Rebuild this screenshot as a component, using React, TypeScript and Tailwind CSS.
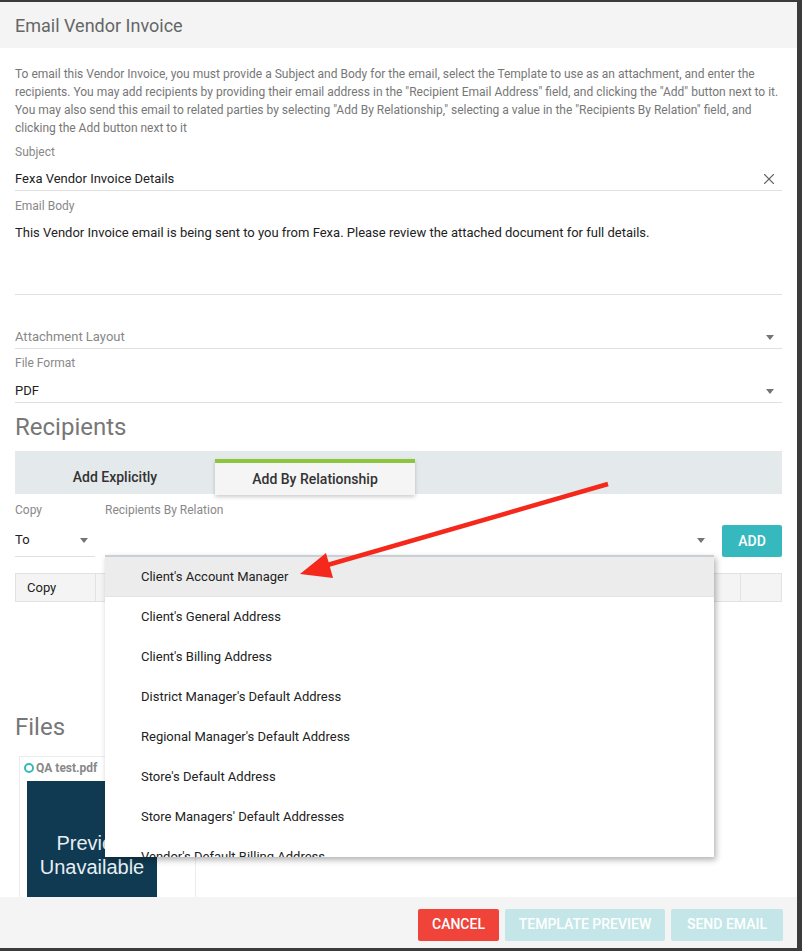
import { X } from "lucide-react";

const relations = [
  "Client's Account Manager",
  "Client's General Address",
  "Client's Billing Address",
  "District Manager's Default Address",
  "Regional Manager's Default Address",
  "Store's Default Address",
  "Store Managers' Default Addresses",
  "Vendor's Default Billing Address",
];

function Caret() {
  return (
    <span className="h-0 w-0 border-x-[4px] border-t-[5px] border-x-transparent border-t-[#757575]" />
  );
}

export default function App() {
  return (
    <div className="relative h-[951px] w-[802px] overflow-hidden bg-[#3b3b3b] font-['Roboto',sans-serif]">
      <div className="mt-[2px] flex h-[946px] w-[797px] flex-col bg-white">
        {/* Header */}
        <div className="flex h-[46px] shrink-0 items-center bg-[#f4f4f4] px-[15px]">
          <h1 className="text-[18px] text-[#666]">Email Vendor Invoice</h1>
        </div>

        {/* Body */}
        <div className="relative flex-1 overflow-hidden px-[15px]">
          <p className="mt-[17px] text-[12px] leading-[18px] text-[#777]">
            To email this Vendor Invoice, you must provide a Subject and Body for the email, select the Template to use as
            an attachment, and enter the recipients. You may add recipients by providing their email address in the
            "Recipient Email Address" field, and clicking the "Add" button next to it. You may also send this email to
            related parties by selecting "Add By Relationship," selecting a value in the "Recipients By Relation" field, and
            clicking the Add button next to it
          </p>

          {/* Subject */}
          <div className="mt-[7px] text-[12px] leading-4 text-[#888]">Subject</div>
          <div className="flex h-[31px] items-center justify-between border-b border-[#e0e0e0] pt-[8px] text-[13px] text-[#222]">
            <span className="leading-[22px]">Fexa Vendor Invoice Details</span>
            <X className="mr-[4px] h-[18px] w-[18px] text-[#666]" strokeWidth={1.5} />
          </div>

          {/* Email body */}
          <div className="mt-[7px] text-[12px] leading-4 text-[#888]">Email Body</div>
          <div className="h-[81px] border-b border-[#e0e0e0] pt-[7px] text-[13px] leading-[24px] text-[#222]">
            This Vendor Invoice email is being sent to you from Fexa. Please review the attached document for full details.
          </div>

          {/* Attachment layout */}
          <div className="flex h-[54px] items-start justify-between border-b border-[#e0e0e0] pt-[30px] text-[13px] leading-[24px] text-[#888]">
            <span>Attachment Layout</span>
            <span className="mr-[8px] mt-[10px] flex">
              <Caret />
            </span>
          </div>

          {/* File format */}
          <div className="mt-[6px] text-[12px] leading-4 text-[#888]">File Format</div>
          <div className="flex h-[32px] items-start justify-between border-b border-[#e0e0e0] pt-[8px] text-[13px] leading-[24px] text-[#222]">
            <span>PDF</span>
            <span className="mr-[8px] mt-[10px] flex">
              <Caret />
            </span>
          </div>

          {/* Recipients */}
          <h2 className="mt-[8px] text-[24px] leading-[32px] text-[#777]">Recipients</h2>
          <div className="mt-[8px] flex h-[43px] bg-[#e4e9ec]">
            <div className="flex w-[200px] items-center justify-center pt-[9px] text-[14px] font-medium text-[#333]">
              Add Explicitly
            </div>
            <div className="mt-[8px] flex h-[36px] w-[200px] items-center justify-center border-t-[4px] border-[#8cc63f] bg-[#f5f5f5] text-[14px] font-medium text-[#333] shadow-[0_2px_4px_rgba(0,0,0,0.2)]">
              Add By Relationship
            </div>
          </div>

          <div className="mt-[8px] flex text-[12px] leading-4 text-[#888]">
            <span className="w-[90px]">Copy</span>
            <span>Recipients By Relation</span>
          </div>
          <div className="flex h-[39px] items-end">
            <div className="flex h-[39px] w-[80px] items-center justify-between border-b border-[#e0e0e0] pt-[6px] text-[13px] text-[#222]">
              <span>To</span>
              <span className="mr-[7px] flex">
                <Caret />
              </span>
            </div>
            <div className="ml-[10px] flex h-[39px] w-[605px] items-center justify-end pt-[6px]">
              <span className="mr-[3px] flex">
                <Caret />
              </span>
            </div>
            <button className="ml-[14px] h-[32px] w-[60px] rounded-[2px] bg-[#35b9be] text-[14px] font-medium uppercase text-white">
              Add
            </button>
          </div>

          {/* Table header */}
          <div className="mt-[16px] flex h-[29px] border border-[#e2e2e2] bg-[#f4f4f4] text-[13px] text-[#222]">
            <div className="flex w-[80px] items-center border-r border-[#e2e2e2] pl-[11px]">Copy</div>
            <div className="flex-1 border-r border-[#e2e2e2]" />
            <div className="w-[40px]" />
          </div>

          {/* Files */}
          <h2 className="mt-[109px] text-[24px] leading-[32px] text-[#777]">Files</h2>
          <div className="ml-[4px] mt-[13px] h-[160px] w-[177px] border border-[#ececec] px-[7px] pt-[4px]">
            <div className="-ml-[3px] flex items-center gap-[2px] text-[12px] font-bold leading-[14px] text-[#888]">
              <span className="h-[10px] w-[10px] rounded-full border-[2px] border-[#35b9be]" />
              QA test.pdf
            </div>
            <div className="mt-[6px] flex h-[130px] w-[130px] items-center justify-center bg-[#0f3a52] pt-[18px] text-center font-['Liberation_Sans',Arial,sans-serif] text-[20px] leading-[24px] text-[#e8eef2]">
              Preview
              <br />
              Unavailable
            </div>
          </div>

          {/* Dropdown menu */}
          <div className="absolute left-[105px] top-[507px] h-[302px] w-[609px] overflow-hidden border-t-[2px] border-[#c9cfd2] bg-white shadow-[2px_3px_6px_rgba(0,0,0,0.3)]">
            {relations.map((r, i) => (
              <div
                key={r}
                className={`flex h-[40px] items-center pl-[36px] text-[13px] text-[#222] ${
                  i === 0 ? "border-b border-[#e4e4e4] bg-[#ececec]" : ""
                }`}
              >
                {r}
              </div>
            ))}
          </div>
        </div>

        {/* Footer */}
        <div className="flex h-[51px] shrink-0 items-center justify-end gap-[6px] bg-[#f4f4f4] pr-[14px] pt-[4px]">
          <button className="h-[32px] w-[81px] rounded-[2px] bg-[#f0433a] text-[14px] font-medium uppercase text-white">
            Cancel
          </button>
          <button className="h-[32px] w-[160px] rounded-[2px] bg-[#c4e6e8] text-[14px] font-medium uppercase text-white">
            Template Preview
          </button>
          <button className="h-[32px] w-[112px] rounded-[2px] bg-[#c4e6e8] text-[14px] font-medium uppercase text-white">
            Send Email
          </button>
        </div>
      </div>

      {/* Annotation arrow */}
      <svg className="pointer-events-none absolute inset-0" width="802" height="951" viewBox="0 0 802 951">
        <line x1="608" y1="484" x2="324" y2="566" stroke="#f5281c" strokeWidth="4.5" />
        <polygon points="300,574 326,553 333,578" fill="#f5281c" />
      </svg>
    </div>
  );
}
